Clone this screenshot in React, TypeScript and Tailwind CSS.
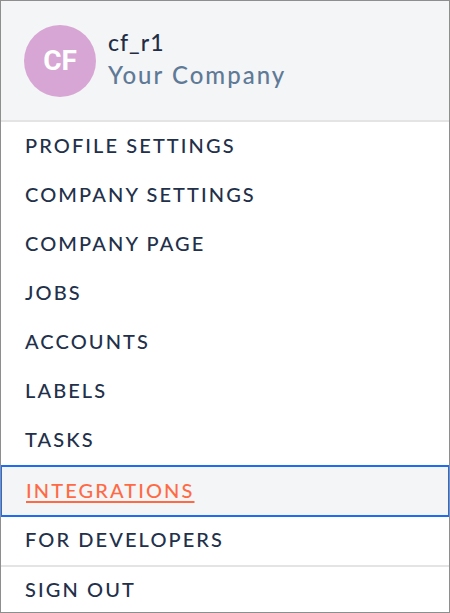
import React from 'react';

const items = [
    'PROFILE SETTINGS',
    'COMPANY SETTINGS',
    'COMPANY PAGE',
    'JOBS',
    'ACCOUNTS',
    'LABELS',
    'TASKS',
];

const font = { fontFamily: 'Lato, "Open Sans", sans-serif' };

const App: React.FC = () => {
    return (
        <div
            className="w-[450px] h-[613px] overflow-hidden bg-white border border-[#8e8e8e] flex flex-col"
            style={font}
        >
            {/* Header */}
            <div className="h-[121px] shrink-0 bg-[#f4f5f7] border-b-2 border-[#e4e4e4] flex items-center gap-3 pl-[23px]">
                <div className="w-[72px] h-[72px] rounded-full bg-[#d8a6d4] flex items-center justify-center">
                    <span
                        className="text-white text-[28px] font-bold"
                        style={{ fontFamily: 'Roboto, sans-serif' }}
                    >
                        CF
                    </span>
                </div>
                <div className="flex flex-col leading-none -mt-[3px]">
                    <span className="text-[23px] tracking-[1px] text-[#1f2d45] font-medium mb-[9px]">cf_r1</span>
                    <span className="text-[24px] text-[#5f7a96] font-medium tracking-[2px]">Your Company</span>
                </div>
            </div>

            {/* Menu */}
            <div className="flex flex-col">
                {items.map((item) => (
                    <div
                        key={item}
                        className="h-[49px] shrink-0 flex items-center pl-6 pb-[4px] text-[20px] font-medium tracking-[2.1px] text-[#22304a]"
                    >
                        {item}
                    </div>
                ))}
                <div className="h-[52px] shrink-0 flex items-center pl-[24px] pb-[3px] bg-[#f4f5f7] border-2 border-[#1f6bf2] -mx-px">
                    <span className="text-[20px] font-medium tracking-[2.1px] text-[#ff6a45] underline decoration-2 underline-offset-[3px]">
                        INTEGRATIONS
                    </span>
                </div>
                <div className="h-[50px] shrink-0 flex items-center pl-6 pb-[4px] text-[20px] font-medium tracking-[2.1px] text-[#22304a] border-b-2 border-[#e4e4e4]">
                    FOR DEVELOPERS
                </div>
                <div className="h-[46px] shrink-0 flex items-center pl-6 pb-[2px] text-[20px] font-medium tracking-[2.1px] text-[#22304a]">
                    SIGN OUT
                </div>
            </div>
        </div>
    );
};

export default App;
